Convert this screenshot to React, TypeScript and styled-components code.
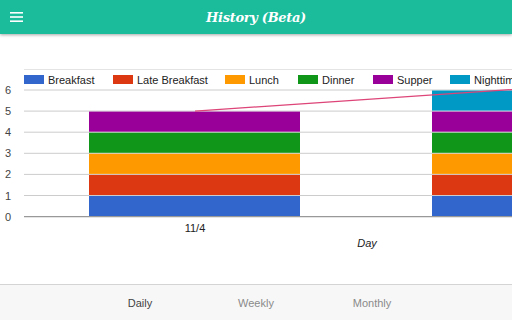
import React from "react";
import styled, { createGlobalStyle } from "styled-components";

const Global = createGlobalStyle`
  html, body { margin: 0; padding: 0; background: #fff; }
  body { font-family: "Liberation Sans", Arial, sans-serif; }
  * { box-sizing: border-box; }
`;

const Page = styled.div`
  width: 512px;
  height: 320px;
  display: flex;
  flex-direction: column;
  overflow: hidden;
`;

const Header = styled.header`
  height: 34px;
  flex: none;
  background: #1abc9c;
  display: flex;
  align-items: center;
  position: relative;
  z-index: 1;
  box-shadow: 0 1px 3px rgba(0, 0, 0, 0.35);
  padding-left: 10px;
`;

const MenuButton = styled.div`
  width: 13px;
  height: 12px;
  display: flex;
`;

const Title = styled.h1`
  flex: 1;
  margin: 0 23px 0 0;
  text-align: center;
  color: #fff;
  font-family: "DejaVu Serif", serif;
  font-style: italic;
  font-weight: bold;
  font-size: 13px;
  letter-spacing: -0.3px;
`;

const Main = styled.main`
  flex: 1;
  display: flex;
  flex-direction: column;
  padding-top: 35px;
`;

const Legend = styled.div`
  margin-left: 24px;
  height: 20px;
  border-top: 1px solid #e4e4e4;
  display: flex;
  align-items: center;
  white-space: nowrap;
  overflow: hidden;
  font-size: 11px;
  color: #222;
`;

const LegendItem = styled.div<{ $w: number }>`
  flex: none;
  width: ${(p) => p.$w}px;
  display: flex;
  align-items: center;
  gap: 4px;
`;

const Swatch = styled.span<{ $c: string }>`
  width: 20px;
  height: 9px;
  background: ${(p) => p.$c};
  flex: none;
`;

const ChartSvg = styled.svg`
  display: block;
  width: 512px;
  height: 175px;
  overflow: visible;
  font-family: "Liberation Sans", Arial, sans-serif;
`;

const Tabs = styled.nav`
  height: 36px;
  flex: none;
  background: #f7f7f7;
  border-top: 1px solid #d4d4d4;
  display: grid;
  grid-template-columns: repeat(3, 116px);
  justify-content: center;
  align-items: center;
`;

const Tab = styled.div<{ $active?: boolean }>`
  text-align: center;
  font-size: 11px;
  color: ${(p) => (p.$active ? "#444" : "#8a8a8a")};
`;

const series = [
  { name: "Breakfast", color: "#3366cc", w: 89 },
  { name: "Late Breakfast", color: "#dc3912", w: 112 },
  { name: "Lunch", color: "#ff9900", w: 73 },
  { name: "Dinner", color: "#109618", w: 75 },
  { name: "Supper", color: "#990099", w: 77 },
  { name: "Nighttime", color: "#0099c6", w: 90 },
];

const top = 1;
const unit = 21.1;
const yOf = (v: number) => top + (6 - v) * unit;

const bars = [
  { x: 89, w: 211, n: 5 },
  { x: 432, w: 211, n: 6 },
];

export default function App() {
  return (
    <Page>
      <Global />
      <Header>
        <MenuButton>
          <svg width="13" height="12" viewBox="0 0 13 12">
            <rect x="0" y="1" width="13" height="1.6" fill="#fff" />
            <rect x="0" y="5.2" width="13" height="1.6" fill="#fff" />
            <rect x="0" y="9.4" width="13" height="1.6" fill="#fff" />
          </svg>
        </MenuButton>
        <Title>History (Beta)</Title>
      </Header>
      <Main>
        <Legend>
          {series.map((s) => (
            <LegendItem key={s.name} $w={s.w}>
              <Swatch $c={s.color} />
              {s.name}
            </LegendItem>
          ))}
        </Legend>
        <ChartSvg viewBox="0 0 512 175">
          {[6, 5, 4, 3, 2, 1].map((v) => (
            <line key={v} x1={24} x2={512} y1={yOf(v)} y2={yOf(v)} stroke="#cccccc" strokeWidth={1} />
          ))}
          {bars.map((b, bi) =>
            series.slice(0, b.n).map((s, i) => (
              <rect
                key={`${bi}-${i}`}
                x={b.x}
                y={yOf(i + 1) + 0.5}
                width={b.w}
                height={unit - 1}
                fill={s.color}
              />
            ))
          )}
          <line x1={24} x2={512} y1={yOf(0)} y2={yOf(0)} stroke="#999" strokeWidth={1.4} />
          <line x1={195} y1={yOf(5)} x2={512} y2={yOf(6.02)} stroke="#dd4477" strokeWidth={1.2} />
          {[6, 5, 4, 3, 2, 1, 0].map((v) => (
            <text key={v} x={8} y={yOf(v) + 4} fontSize={11} fill="#444" textAnchor="middle">
              {v}
            </text>
          ))}
          <text x={195} y={143} fontSize={11} fill="#222" textAnchor="middle">
            11/4
          </text>
          <text x={367} y={158} fontSize={11} fill="#222" fontStyle="italic" textAnchor="middle">
            Day
          </text>
        </ChartSvg>
      </Main>
      <Tabs>
        <Tab $active>Daily</Tab>
        <Tab>Weekly</Tab>
        <Tab>Monthly</Tab>
      </Tabs>
    </Page>
  );
}
